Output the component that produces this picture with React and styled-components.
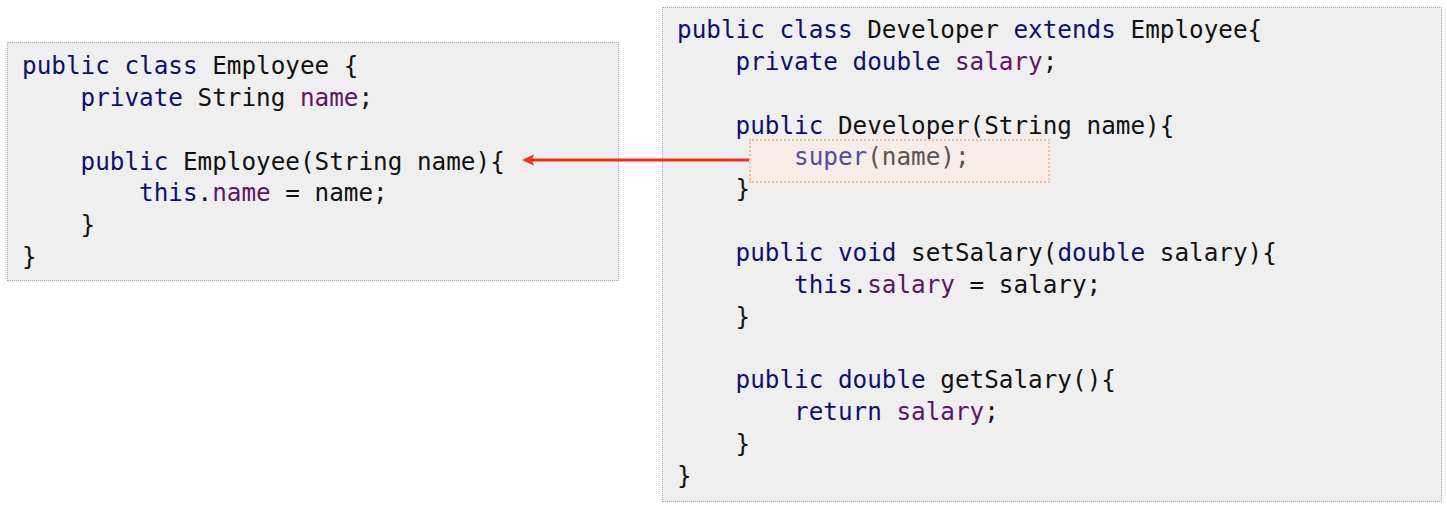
import React from 'react';
import styled, { createGlobalStyle } from 'styled-components';

const GlobalStyle = createGlobalStyle`
  html, body {
    margin: 0;
    padding: 0;
    background: #ffffff;
  }
`;

const colors = {
  kw: '#0f0f6e',
  field: '#5e1466',
  plain: '#111111',
  dim: '#555555',
  superKw: '#50509a',
};

const Page = styled.div`
  position: relative;
  display: flex;
  align-items: flex-start;
  gap: 43px;
  padding: 7px 0 0 7px;
  width: 1447px;
  height: 509px;
  box-sizing: border-box;
`;

const CodeBox = styled.pre`
  position: relative;
  margin: ${p => p.$offset || 0}px 0 0 0;
  width: ${p => p.$width}px;
  box-sizing: border-box;
  padding: ${p => p.$pad};
  background: #efefef;
  border: 1px dotted #aaaaaa;
  font-family: "DejaVu Sans Mono", "Liberation Mono", monospace;
  font-size: 24.3px;
  line-height: 31.85px;
  color: ${colors.plain};
  white-space: pre;
`;

const Line = styled.div`
  position: relative;
  z-index: 1;
  height: 31.85px;
`;

const Tok = styled.span`
  color: ${p => colors[p.$k] || colors.plain};
`;

const Highlight = styled.div`
  position: absolute;
  z-index: 0;
  left: 86px;
  top: 131px;
  width: 301px;
  height: 44px;
  box-sizing: border-box;
  border: 2px dotted #f5bf9e;
  background: #f6ede8;
`;

const Arrow = styled.svg`
  position: absolute;
  left: 518px;
  top: 152px;
`;

const K = ({ children }) => <Tok $k="kw">{children}</Tok>;
const F = ({ children }) => <Tok $k="field">{children}</Tok>;

const employee = [
  <><K>public</K> <K>class</K> Employee {'{'}</>,
  <>    <K>private</K> String <F>name</F>;</>,
  <></>,
  <>    <K>public</K> Employee(String name){'{'}</>,
  <>        <K>this</K>.<F>name</F> = name;</>,
  <>    {'}'}</>,
  <>{'}'}</>,
];

const developer = [
  <><K>public</K> <K>class</K> Developer <K>extends</K> Employee{'{'}</>,
  <>    <K>private</K> <K>double</K> <F>salary</F>;</>,
  <></>,
  <>    <K>public</K> Developer(String name){'{'}</>,
  <>        <Tok $k="superKw">super</Tok><Tok $k="dim">(name);</Tok></>,
  <>    {'}'}</>,
  <></>,
  <>    <K>public</K> <K>void</K> setSalary(<K>double</K> salary){'{'}</>,
  <>        <K>this</K>.<F>salary</F> = salary;</>,
  <>    {'}'}</>,
  <></>,
  <>    <K>public</K> <K>double</K> getSalary(){'{'}</>,
  <>        <K>return</K> <F>salary</F>;</>,
  <>    {'}'}</>,
  <>{'}'}</>,
];

export default function App() {
  return (
    <>
      <GlobalStyle />
      <Page>
        <CodeBox $width={612} $offset={35} $pad="7px 10px 7px 14px">
          {employee.map((l, i) => <Line key={i}>{l}</Line>)}
        </CodeBox>
        <CodeBox $width={780} $pad="6px 10px 9px 14px">
          <Highlight />
          {developer.map((l, i) => <Line key={i}>{l}</Line>)}
        </CodeBox>
        <Arrow width="236" height="16" viewBox="0 0 236 16">
          <line x1="14" y1="8" x2="231" y2="8" stroke="#e8301c" strokeWidth="3" />
          <polygon points="4,8 16,2.5 14,8 16,13.5" fill="#e8301c" />
        </Arrow>
      </Page>
    </>
  );
}
